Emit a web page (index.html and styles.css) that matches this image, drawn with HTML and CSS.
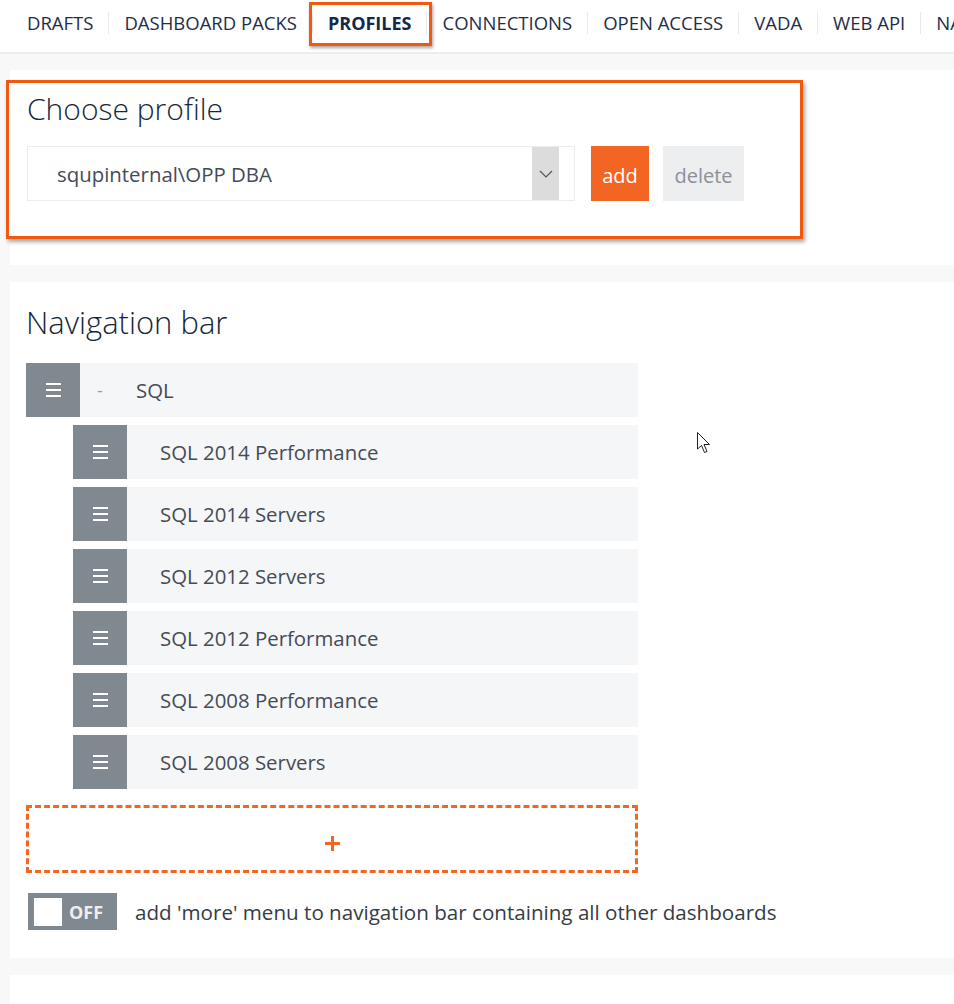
FILE: index.html
```html
<!DOCTYPE html>
<html>
<head>
<meta charset="utf-8">
<link rel="stylesheet" href="styles.css">
</head>
<body>
<nav class="topnav">
  <ul class="tabs">
    <li class="tab">DRAFTS</li>
    <li class="tab">DASHBOARD PACKS</li>
    <li class="tab active">PROFILES</li>
    <li class="tab">CONNECTIONS</li>
    <li class="tab">OPEN ACCESS</li>
    <li class="tab">VADA</li>
    <li class="tab">WEB API</li>
    <li class="tab">NAVIGATION</li>
  </ul>
</nav>
<main class="content">
  <section class="panel panel-profile">
    <div class="annot">
      <h2 class="heading">Choose profile</h2>
      <div class="profile-row">
        <div class="select">
          <span class="select-text">squpinternal\OPP DBA</span>
          <span class="select-arrow">
            <svg width="14" height="8" viewBox="0 0 14 8"><path d="M1 1 L7 7 L13 1" fill="none" stroke="#555" stroke-width="1.2"/></svg>
          </span>
        </div>
        <button class="btn btn-add">add</button>
        <button class="btn btn-delete">delete</button>
      </div>
    </div>
  </section>
  <section class="panel panel-nav">
    <h2 class="heading heading-nav">Navigation bar</h2>
    <div class="nav-list">
      <div class="nav-item">
        <span class="handle"><svg width="15" height="14" viewBox="0 0 15 14"><rect x="0" y="0" width="15" height="2" fill="#fff"/><rect x="0" y="6" width="15" height="2" fill="#fff"/><rect x="0" y="12" width="15" height="2" fill="#fff"/></svg></span>
        <span class="collapse">-</span>
        <span class="item-label">SQL</span>
      </div>
      <div class="nav-item child">
        <span class="handle"><svg width="15" height="14" viewBox="0 0 15 14"><rect x="0" y="0" width="15" height="2" fill="#fff"/><rect x="0" y="6" width="15" height="2" fill="#fff"/><rect x="0" y="12" width="15" height="2" fill="#fff"/></svg></span>
        <span class="item-label">SQL 2014 Performance</span>
      </div>
      <div class="nav-item child">
        <span class="handle"><svg width="15" height="14" viewBox="0 0 15 14"><rect x="0" y="0" width="15" height="2" fill="#fff"/><rect x="0" y="6" width="15" height="2" fill="#fff"/><rect x="0" y="12" width="15" height="2" fill="#fff"/></svg></span>
        <span class="item-label">SQL 2014 Servers</span>
      </div>
      <div class="nav-item child">
        <span class="handle"><svg width="15" height="14" viewBox="0 0 15 14"><rect x="0" y="0" width="15" height="2" fill="#fff"/><rect x="0" y="6" width="15" height="2" fill="#fff"/><rect x="0" y="12" width="15" height="2" fill="#fff"/></svg></span>
        <span class="item-label">SQL 2012 Servers</span>
      </div>
      <div class="nav-item child">
        <span class="handle"><svg width="15" height="14" viewBox="0 0 15 14"><rect x="0" y="0" width="15" height="2" fill="#fff"/><rect x="0" y="6" width="15" height="2" fill="#fff"/><rect x="0" y="12" width="15" height="2" fill="#fff"/></svg></span>
        <span class="item-label">SQL 2012 Performance</span>
      </div>
      <div class="nav-item child">
        <span class="handle"><svg width="15" height="14" viewBox="0 0 15 14"><rect x="0" y="0" width="15" height="2" fill="#fff"/><rect x="0" y="6" width="15" height="2" fill="#fff"/><rect x="0" y="12" width="15" height="2" fill="#fff"/></svg></span>
        <span class="item-label">SQL 2008 Performance</span>
      </div>
      <div class="nav-item child">
        <span class="handle"><svg width="15" height="14" viewBox="0 0 15 14"><rect x="0" y="0" width="15" height="2" fill="#fff"/><rect x="0" y="6" width="15" height="2" fill="#fff"/><rect x="0" y="12" width="15" height="2" fill="#fff"/></svg></span>
        <span class="item-label">SQL 2008 Servers</span>
      </div>
    </div>
    <div class="add-item"><svg width="15" height="15" viewBox="0 0 15 15"><rect x="6" y="0" width="3" height="15" fill="#f26522"/><rect x="0" y="6" width="15" height="3" fill="#f26522"/></svg></div>
    <div class="toggle-row">
      <span class="toggle"><span class="knob"></span><span class="toggle-text">OFF</span></span>
      <span class="toggle-label">add 'more' menu to navigation bar containing all other dashboards</span>
    </div>
  </section>
  <section class="panel panel-empty"></section>
</main>
<svg class="cursor" width="14" height="24" viewBox="0 0 14 24"><path d="M0.5 0.5 L0.5 17 L4.5 13.5 L7.5 20.5 L10 19.5 L7 12.5 L12.5 12.5 Z" fill="#fff" stroke="#222" stroke-width="1"/></svg>
</body>
</html>
```

FILE: styles.css
```css
html, body {
  margin: 0;
  padding: 0;
}
body {
  background: #f8f8f8;
  font-family: "Open Sans", "Noto Sans", sans-serif;
  color: #3f4650;
  width: 954px;
  height: 1004px;
  overflow: hidden;
  position: relative;
}
.topnav {
  background: #fff;
  height: 52px;
  border-bottom: 2px solid #ececec;
  box-sizing: content-box;
  overflow: hidden;
}
.tabs {
  list-style: none;
  margin: 0;
  padding: 12px 0 0 12px;
  display: flex;
  white-space: nowrap;
}
.tab {
  font-size: 18.5px;
  line-height: 22px;
  padding: 0 15px;
  color: #1d2d4a;
  border-left: 1px solid #e6e9ee;
}
.tab:first-child {
  border-left: none;
}
.tab.active {
  font-size: 18px;
  font-weight: 700;
  position: relative;
  color: #13284a;
}
.tab.active::after {
  content: "";
  position: absolute;
  left: -4px;
  right: -6px;
  top: -10px;
  bottom: -12px;
  border: 3px solid #f15a0e;
  box-shadow: 1px 2px 3px rgba(0,0,0,0.35);
}
.content {
  padding-top: 16px;
  padding-left: 10px;
  display: flex;
  flex-direction: column;
  gap: 17px;
}
.panel {
  background: #fff;
}
.panel-profile {
  padding: 10px 0 26px 0;
}
.annot {
  margin-left: -4px;
  width: 797px;
  box-sizing: border-box;
  border: 3px solid #f15a0e;
  box-shadow: 2px 3px 4px rgba(0,0,0,0.35);
  padding: 4px 0 35px 18px;
}
.heading {
  margin: 0;
  font-size: 30px;
  line-height: 44px;
  font-weight: 300;
  color: #17263a;
}
.heading-nav {
  font-size: 31px;
}
.profile-row {
  margin-top: 15px;
  display: flex;
  align-items: flex-start;
}
.select {
  width: 548px;
  height: 55px;
  box-sizing: border-box;
  border: 1px solid #ececec;
  display: flex;
  align-items: stretch;
  background: #fff;
}
.select-text {
  flex: 1;
  padding-left: 29px;
  font-size: 20.4px;
  line-height: 55px;
  color: #444b55;
}
.select-arrow {
  width: 27px;
  background: #dcdcdc;
  margin-right: 15px;
  display: flex;
  align-items: center;
  justify-content: center;
}
.btn {
  border: none;
  height: 55px;
  font-family: inherit;
  font-size: 20px;
  padding: 4px 0 0 0;
  margin: 0;
  line-height: 51px;
}
.btn-add {
  margin-left: 16px;
  width: 58px;
  background: #f26522;
  color: #fff;
}
.btn-delete {
  margin-left: 14px;
  width: 81px;
  background: #eceef0;
  color: #8a9199;
}
.panel-nav {
  padding: 18px 0 28px 16px;
}
.nav-list {
  margin-top: 19px;
  display: flex;
  flex-direction: column;
  gap: 8px;
}
.nav-item {
  width: 612px;
  height: 54px;
  background: #f5f6f8;
  display: flex;
  align-items: center;
}
.nav-item.child {
  margin-left: 47px;
  width: 565px;
}
.handle {
  width: 54px;
  height: 54px;
  background: #808890;
  display: flex;
  align-items: center;
  justify-content: center;
  flex: none;
}
.collapse {
  margin-left: 17px;
  width: 39px;
  font-size: 18px;
  color: #9a9ea4;
}
.item-label {
  font-size: 20.4px;
  line-height: 56px;
  color: #454c56;
}
.child .item-label {
  margin-left: 33px;
}
.add-item {
  margin-top: 16px;
  width: 612px;
  height: 68px;
  box-sizing: border-box;
  border: 3px dashed #f26522;
  display: flex;
  align-items: center;
  justify-content: center;
  padding-top: 9px;
}
.toggle-row {
  margin-top: 20px;
  margin-left: 2px;
  display: flex;
  align-items: center;
}
.toggle {
  width: 89px;
  height: 37px;
  background: #808890;
  display: flex;
  align-items: center;
}
.knob {
  width: 28px;
  height: 28px;
  background: #fff;
  margin-left: 6px;
}
.toggle-text {
  margin-left: 7px;
  color: #eeeeee;
  font-weight: 700;
  font-size: 18px;
}
.toggle-label {
  margin-left: 18px;
  font-size: 20.6px;
  color: #353c46;
}
.panel-empty {
  height: 60px;
}
.cursor {
  position: absolute;
  left: 697px;
  top: 432px;
}
```
